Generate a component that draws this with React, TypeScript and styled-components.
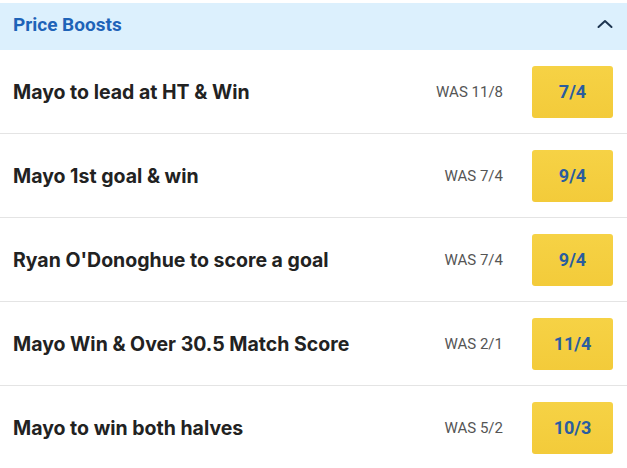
import React from 'react';
import styled, { createGlobalStyle } from 'styled-components';

const GlobalStyle = createGlobalStyle`
	body {
		margin: 0;
		background: #ffffff;
		font-family: Roboto, 'Liberation Sans', sans-serif;
	}
`;

const boosts = [
	{ label: 'Mayo to lead at HT & Win', was: '11/8', price: '7/4' },
	{ label: 'Mayo 1st goal & win', was: '7/4', price: '9/4' },
	{ label: "Ryan O'Donoghue to score a goal", was: '7/4', price: '9/4' },
	{ label: 'Mayo Win & Over 30.5 Match Score', was: '2/1', price: '11/4' },
	{ label: 'Mayo to win both halves', was: '5/2', price: '10/3' },
];

function App() {
	return (
		<>
			<GlobalStyle />
			<Panel>
				<Header>
					<Title>Price Boosts</Title>
					<svg width="16" height="10" viewBox="0 0 16 10" fill="none">
						<path d="M1.5 8 L8 2 L14.5 8" stroke="#1d3550" strokeWidth="2" strokeLinecap="round" strokeLinejoin="round" />
					</svg>
				</Header>
				{boosts.map((b) => (
					<Row key={b.label}>
						<Label>{b.label}</Label>
						<Was>WAS {b.was}</Was>
						<PriceBtn>{b.price}</PriceBtn>
					</Row>
				))}
			</Panel>
		</>
	);
}

const Panel = styled.div`
	width: 627px;
	padding-top: 3px;
`;

const Header = styled.div`
	display: flex;
	align-items: center;
	justify-content: space-between;
	height: 47px;
	padding: 0 14px 5px 13px;
	box-sizing: border-box;
	background-color: #dcf0fd;
`;

const Title = styled.h2`
	margin: 0;
	font-family: Roboto, sans-serif;
	font-size: 19px;
	font-weight: 700;
	color: #1e63b8;
`;

const Row = styled.div`
	display: flex;
	align-items: center;
	height: 84px;
	padding: 0 14px 0 13px;
	box-sizing: border-box;
	border-bottom: 1px solid #e4e4e4;
`;

const Label = styled.span`
	flex: 1;
	font-family: Inter, sans-serif;
	font-size: 19.5px;
	font-weight: 700;
	color: #222222;
`;

const Was = styled.span`
	font-family: Roboto, sans-serif;
	font-size: 15px;
	color: #555555;
	margin-right: 29px;
`;

const PriceBtn = styled.button`
	width: 81px;
	height: 52px;
	border: none;
	border-radius: 3px;
	background: linear-gradient(#f6d245, #f3cb3a);
	font-family: Roboto, sans-serif;
	font-size: 18px;
	font-weight: 700;
	color: #2a5d9f;
`;

export default App;
